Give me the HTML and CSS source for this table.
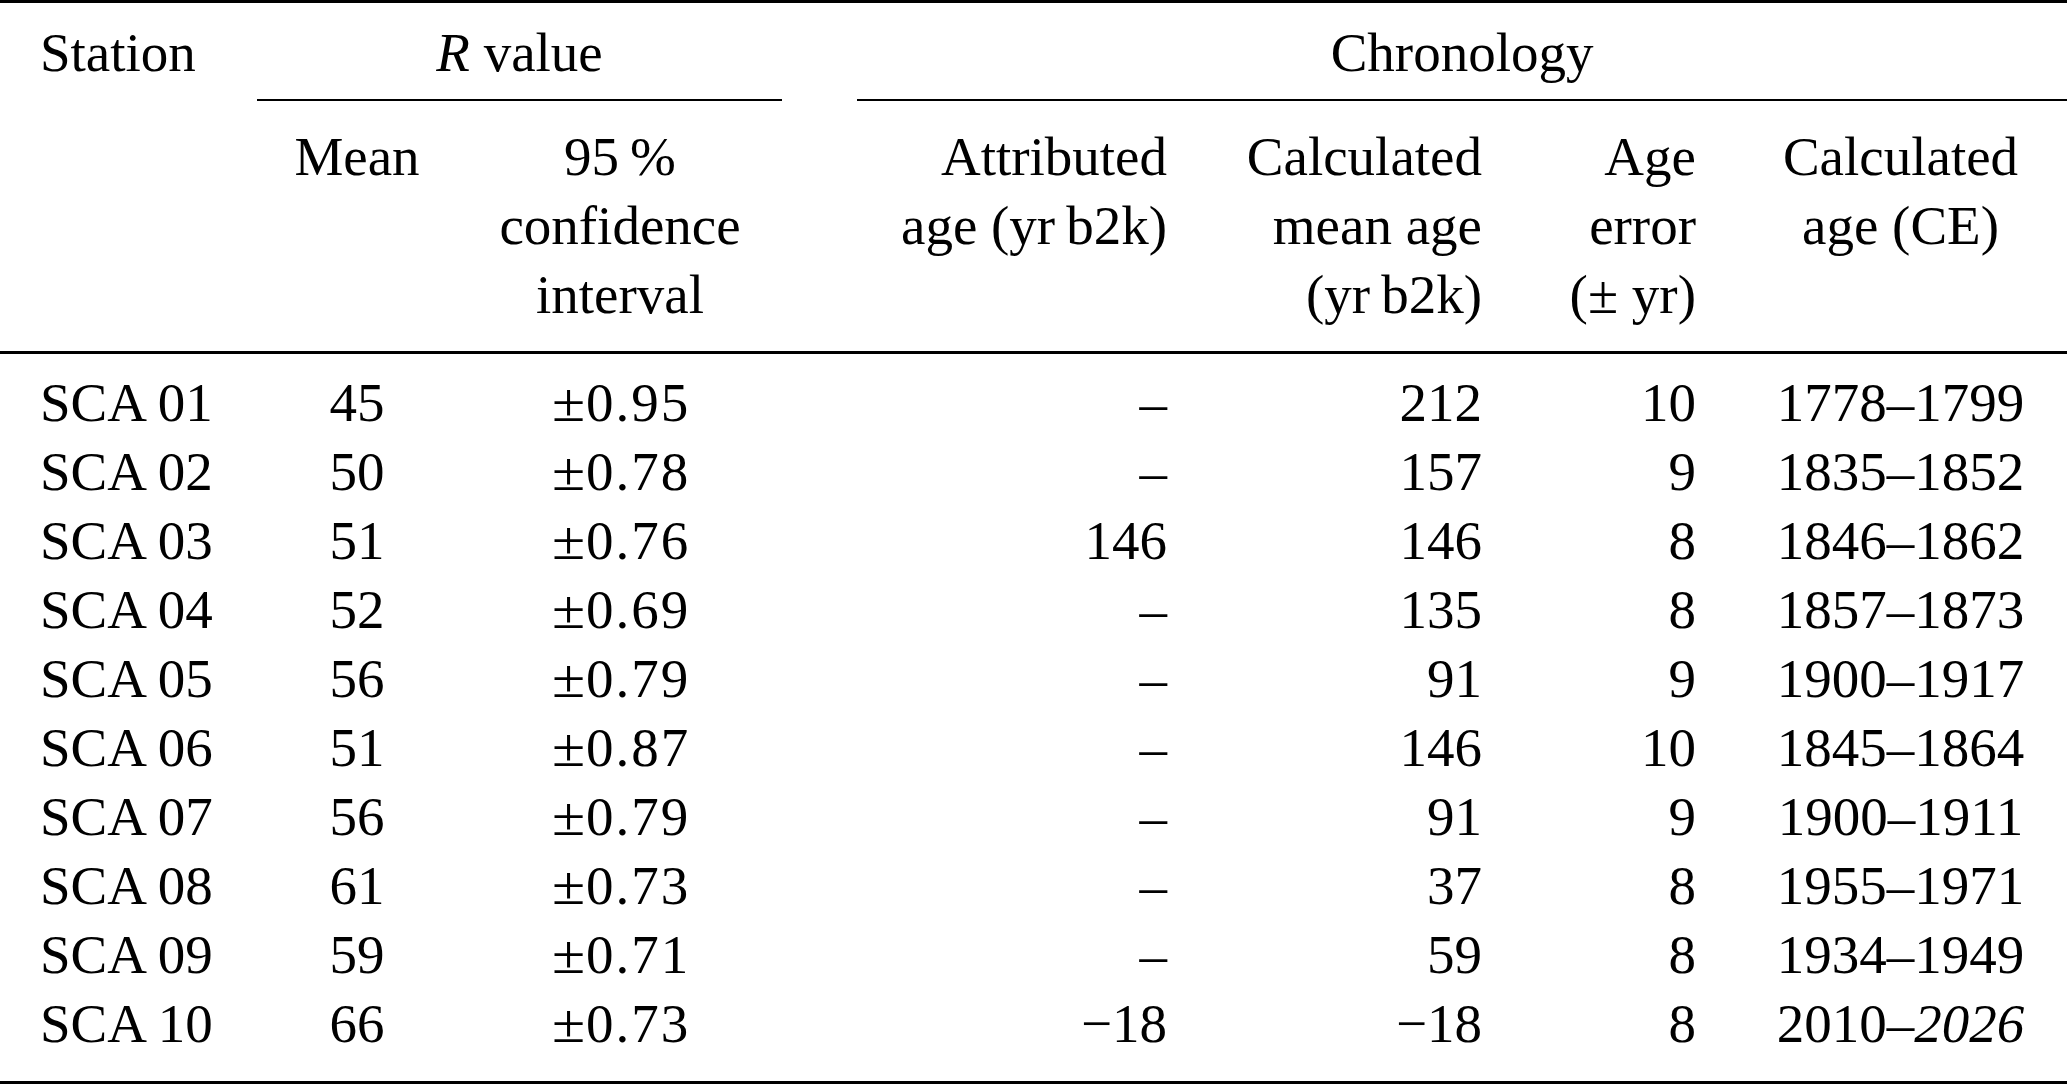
FILE: index.html
```html
<!DOCTYPE html>
<html lang="en">
<head>
<meta charset="utf-8">
<title>Table</title>
<link rel="stylesheet" href="styles.css">
</head>
<body>
<table class="tbl">
  <colgroup>
    <col class="c1"><col class="c2"><col class="c3"><col class="c4"><col class="c5"><col class="c6"><col class="c7">
  </colgroup>
  <thead>
    <tr class="h1">
      <th class="station">Station</th>
      <th colspan="2" class="grp grp-r"><div class="grp-text"><i>R</i> value</div><div class="rule"></div></th>
      <th colspan="4" class="grp grp-c"><div class="grp-text">Chronology</div><div class="rule"></div></th>
    </tr>
    <tr class="h2">
      <th class="station"></th>
      <th class="ctr">Mean</th>
      <th class="ctr ci">95&#8201;%<br>confidence<br>interval</th>
      <th class="rgt">Attributed<br>age (yr&#8201;b2k)</th>
      <th class="rgt">Calculated<br>mean age<br>(yr&#8201;b2k)</th>
      <th class="rgt">Age<br>error<br>(± yr)</th>
      <th class="ce">Calculated<br>age (CE)</th>
    </tr>
  </thead>
  <tbody>
    <tr><td class="station">SCA 01</td><td class="ctr">45</td><td class="ctr ci"><span class="pm">±</span><span class="civ">0.95</span></td><td class="rgt">–</td><td class="rgt">212</td><td class="rgt">10</td><td class="ce">1778–1799</td></tr>
    <tr><td class="station">SCA 02</td><td class="ctr">50</td><td class="ctr ci"><span class="pm">±</span><span class="civ">0.78</span></td><td class="rgt">–</td><td class="rgt">157</td><td class="rgt">9</td><td class="ce">1835–1852</td></tr>
    <tr><td class="station">SCA 03</td><td class="ctr">51</td><td class="ctr ci"><span class="pm">±</span><span class="civ">0.76</span></td><td class="rgt">146</td><td class="rgt">146</td><td class="rgt">8</td><td class="ce">1846–1862</td></tr>
    <tr><td class="station">SCA 04</td><td class="ctr">52</td><td class="ctr ci"><span class="pm">±</span><span class="civ">0.69</span></td><td class="rgt">–</td><td class="rgt">135</td><td class="rgt">8</td><td class="ce">1857–1873</td></tr>
    <tr><td class="station">SCA 05</td><td class="ctr">56</td><td class="ctr ci"><span class="pm">±</span><span class="civ">0.79</span></td><td class="rgt">–</td><td class="rgt">91</td><td class="rgt">9</td><td class="ce">1900–1917</td></tr>
    <tr><td class="station">SCA 06</td><td class="ctr">51</td><td class="ctr ci"><span class="pm">±</span><span class="civ">0.87</span></td><td class="rgt">–</td><td class="rgt">146</td><td class="rgt">10</td><td class="ce">1845–1864</td></tr>
    <tr><td class="station">SCA 07</td><td class="ctr">56</td><td class="ctr ci"><span class="pm">±</span><span class="civ">0.79</span></td><td class="rgt">–</td><td class="rgt">91</td><td class="rgt">9</td><td class="ce">1900–1911</td></tr>
    <tr><td class="station">SCA 08</td><td class="ctr">61</td><td class="ctr ci"><span class="pm">±</span><span class="civ">0.73</span></td><td class="rgt">–</td><td class="rgt">37</td><td class="rgt">8</td><td class="ce">1955–1971</td></tr>
    <tr><td class="station">SCA 09</td><td class="ctr">59</td><td class="ctr ci"><span class="pm">±</span><span class="civ">0.71</span></td><td class="rgt">–</td><td class="rgt">59</td><td class="rgt">8</td><td class="ce">1934–1949</td></tr>
    <tr><td class="station">SCA 10</td><td class="ctr">66</td><td class="ctr ci"><span class="pm">±</span><span class="civ">0.73</span></td><td class="rgt">−18</td><td class="rgt">−18</td><td class="rgt">8</td><td class="ce">2010–<i>2026</i></td></tr>
  </tbody>
</table>
</body>
</html>
```
FILE: styles.css
```css
html, body {
  margin: 0;
  padding: 0;
  background: #ffffff;
}

body {
  font-family: "Liberation Serif", "Times New Roman", serif;
  font-size: 55px;
  color: #000000;
}

.tbl {
  width: 2067px;
  table-layout: fixed;
  border-collapse: separate;
  border-spacing: 0;
  border-top: 3px solid #000;
  border-bottom: 3px solid #000;
}

.c1 { width: 237px; }
.c2 { width: 240px; }
.c3 { width: 305px; }
.c4 { width: 405px; }
.c5 { width: 315px; }
.c6 { width: 214px; }
.c7 { width: 351px; }

th, td {
  font-weight: normal;
  line-height: 69px;
  padding: 0;
  vertical-align: top;
  white-space: nowrap;
}

.station {
  text-align: left;
  padding-left: 40px;
}

.ctr { text-align: center; }
.ci { padding-right: 19px; }
.rgt { text-align: right; padding-right: 20px; }
.ce { text-align: center; padding-left: 18px; }

.h1 th {
  padding-top: 15px;
}

.grp-text {
  text-align: center;
}

.rule {
  margin-top: 12px;
  height: 2px;
  background: #000;
}

.grp-r { padding-left: 20px; }
.grp-c { padding-left: 75px; }

.h2 th {
  padding-top: 21px;
  padding-bottom: 22px;
  border-bottom: 3px solid #000;
}

tbody tr:first-child td {
  padding-top: 14px;
}

tbody tr:last-child td {
  padding-bottom: 23px;
}

.pm {
  display: inline-block;
  transform: scaleX(1.1);
  transform-origin: left center;
  margin-right: 4px;
}

.civ {
  letter-spacing: 2px;
  margin-right: -2px;
}
```
